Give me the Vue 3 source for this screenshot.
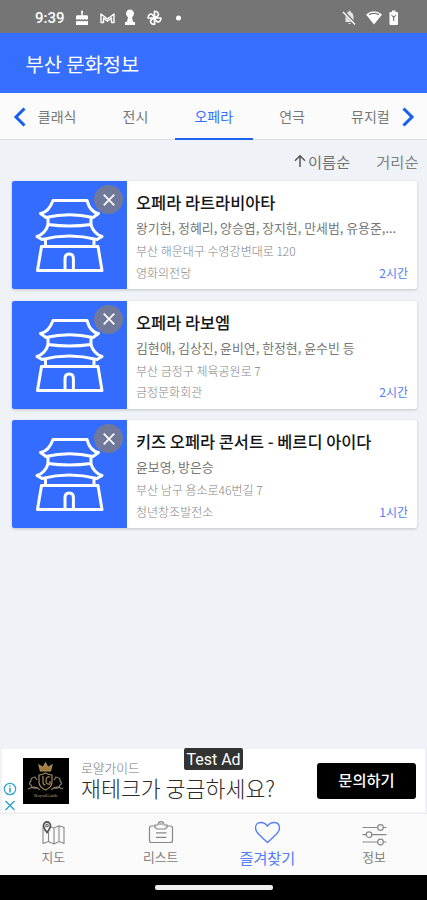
<script setup>
const tabs = [
  { name: '클래식' },
  { name: '전시' },
  { name: '오페라', active: true },
  { name: '연극' },
  { name: '뮤지컬' },
]
const shows = [
  {
    title: '오페라 라트라비아타',
    cast: '왕기헌, 정혜리, 양승엽, 장지헌, 만세범, 유용준,...',
    address: '부산 해운대구 수영강변대로 120',
    venue: '영화의전당',
    time: '2시간',
  },
  {
    title: '오페라 라보엠',
    cast: '김현애, 김상진, 윤비연, 한정현, 윤수빈 등',
    address: '부산 금정구 체육공원로 7',
    venue: '금정문화회관',
    time: '2시간',
  },
  {
    title: '키즈 오페라 콘서트 - 베르디 아이다',
    cast: '윤보영, 방은승',
    address: '부산 남구 용소로46번길 7',
    venue: '청년창조발전소',
    time: '1시간',
  },
]
</script>

<template>
  <div class="screen">
    <div class="status">
      <span class="clock">9:39</span>
      <svg class="s-left" width="112" height="18" viewBox="0 0 112 18" fill="#fff">
        <path d="M7 1.200q2.200 2.400 0 3.600-2.200-1.200 0-3.600zM6.300 4.500h1.400v2H6.300zM2.500 6.200h9q1.500 0 1.500 1.300V10q-1.500 1.300-3 0-1.500 1.300-3 0-1.500 1.300-3 0-1.500 1.300-3 0V7.500q0-1.300 1.500-1.300zM1 11.700q1.500 1 3 0 1.500 1 3 0 1.500 1 3 0 1.500 1 3 0V16H1z" />
        <path d="M26 13.500V5l6.500 5L39 5v8.500h-2.500V9l-4 3.200-4-3.200v4.500z" fill="none" stroke="#fff" stroke-width="1.400" stroke-linejoin="round" />
        <path d="M51.500 6.500a4 4 0 1 1 7 0l-1.500 2 1.200 4.500H60v3H50v-3h1.800L53 8.500z" />
        <path d="M79.500 9V2.300c4 0 5 3.500 2.800 5L79.500 9h6.500c0 4-3.500 5-5 2.800L79.500 9v6.500c-4 0-5-3.500-2.800-5L79.500 9H73c0-4 3.500-5 5-2.800z" fill="none" stroke="#fff" stroke-width="1.600" stroke-linejoin="round" />
        <circle cx="103.500" cy="9" r="2.500" />
      </svg>
      <svg class="s-right" width="58" height="18" viewBox="0 0 58 18" fill="#fff">
        <path d="M3.500 13V8q0-4 3-5V1.800h2V3q3 1 3 5v5zM6 14h3.200q-1.600 2.300-3.200 0z" fill="#e5e5e5" />
        <path d="M1.500 2.500l12 13" stroke="#757575" stroke-width="3" />
        <path d="M1 3l12 12.500" stroke="#fff" stroke-width="1.300" />
        <path d="M24 5.500q8-6.500 16 0l-8 10z" />
        <path d="M27 5.600q5-2.500 10 0" fill="none" stroke="#777" stroke-width="1.200" />
        <path d="M48.500 3H50V1.500h3.500V3H55q1 0 1 1v11q0 1-1 1h-6.500q-1 0-1-1V4q0-1 1-1z" />
        <path d="M49.500 6l2.200 2.500L54 6M51.700 7v5" fill="none" stroke="#777" stroke-width="1.100" />
      </svg>
    </div>

    <header class="header">부산 문화정보</header>

    <nav class="tabs">
      <svg class="chev" width="40" height="46" viewBox="0 0 40 46"><path d="M24.500 15.500L16 24l8.500 8.500" /></svg>
      <div class="tab-list">
        <div v-for="t in tabs" :key="t.name" class="tab" :class="{ active: t.active }">{{ t.name }}</div>
      </div>
      <svg class="chev next" width="40" height="46" viewBox="0 0 40 46"><path d="M14.500 15.500L23 24l-8.500 8.500" /></svg>
    </nav>

    <div class="sort">
      <span class="by-name">
        <svg width="14" height="14" viewBox="0 0 14 14"><path d="M7 13V2M2 6.700L7 1.800l5 4.900" fill="none" stroke="#555" stroke-width="1.500" /></svg>이름순
      </span>
      <span>거리순</span>
    </div>

    <main class="list">
      <article v-for="s in shows" :key="s.title" class="card">
        <div class="thumb">
          <svg width="115" height="108" viewBox="0 0 115 108" fill="none" stroke="#fff" stroke-width="3" stroke-linejoin="round" stroke-linecap="round">
            <path d="M41 19.500h34M41 19.500Q37 31 28.500 32.500L34 36.500Q57 31 81 36.500L86.500 32.500Q78 31 75 19.500" />
            <path d="M36 37v6M79 37v6M36 43.500Q57 46.500 79 43.500" />
            <path d="M36 44Q33 53 25 55.500L30 58.500Q57 51.500 85 58.500L90 55.500Q82 53 79 44" />
            <path d="M33.500 59v6M82 59v6M29.500 65.500h56.500L90 89.500H25.500zM53 89V77.500q0-4.500 4.200-4.500t4.200 4.500V89" />
          </svg>
          <span class="remove">
            <svg width="28" height="28" viewBox="0 0 28 28"><path d="M8.700 8.700l10.600 10.600M19.300 8.700L8.700 19.300" stroke="#fff" stroke-width="1.700" /></svg>
          </span>
        </div>
        <div class="info">
          <h2>{{ s.title }}</h2>
          <p class="cast">{{ s.cast }}</p>
          <p class="small">{{ s.address }}</p>
          <p class="small foot"><span>{{ s.venue }}</span><span class="time">{{ s.time }}</span></p>
        </div>
      </article>
    </main>

    <section class="ad">
      <div class="ad-marks">
        <svg width="14" height="30" viewBox="0 0 14 30" fill="none" stroke="#2aa3cd" stroke-width="1.200">
          <circle cx="7" cy="7" r="5.700" /><path d="M7 6v4.500M7 3.500v1.300" stroke-width="1.600" /><path d="M2.500 19l9 9M11.500 19l-9 9" stroke-width="1.400" />
        </svg>
      </div>
      <svg class="ad-logo" width="46" height="46" viewBox="0 0 46 46">
        <rect width="46" height="46" fill="#000" />
        <g fill="none" stroke="#a78b58" stroke-width="1.200">
          <path d="M17.500 13L16 7l4 2.500L22.500 5 25 9.500 29 7l-1.500 6z" fill="#a47a3d" />
          <path d="M16 17q3 0 6.500-2 3.500 2 6.500 2v7q0 5-6.500 8-6.500-3-6.500-8z" />
          <path d="M20 18v6q0 3 2.500 3M27 19q-4-1-4 3.500t4 3.500v-3" />
          <path d="M15 30Q9 31 8 27q-3-1 0-4-1-3 4-4l2 3M30 30q6 1 7-3 3-1 0-4 1-3-4-4l-2 3M5 31q8-4 12 1M40 31q-8-4-12 1" stroke="#857c66" />
        </g>
        <text x="23" y="38.500" text-anchor="middle" class="logo-text">RoyalGuide</text>
      </svg>
      <div class="ad-copy">
        <div class="ad-brand">로얄가이드</div>
        <div class="ad-title">재테크가 궁금하세요?</div>
      </div>
      <div class="ad-button">문의하기</div>
      <div class="test-ad">Test Ad</div>
    </section>

    <nav class="bottom">
      <div class="item">
        <svg width="28" height="28" viewBox="0 0 28 28" fill="none" stroke="#888" stroke-width="1.100">
          <path d="M9 8.500L4 7v16.500l5.500-2 5.500 2.500 5-2.500 5 2V7.500l-5-1.700-5 2.200-3-1M9.500 12v9.500M15 8v16M20 6v15.500" />
          <path d="M8 12.500Q4.500 8 4.500 5.500a3.500 3.500 0 1 1 7 0Q11.500 8 8 12.500z" stroke="#555" stroke-width="1.800" fill="#fafafa" /><circle cx="8" cy="5.500" r="1.300" stroke="#666" />
        </svg>
        <span>지도</span>
      </div>
      <div class="item">
        <svg width="28" height="28" viewBox="0 0 28 28" fill="none" stroke="#888" stroke-width="1.200">
          <path d="M8 6H4.500Q2.500 6 2.500 8v12.500q0 2 2 2h19q2 0 2-2V8q0-2-2-2H20M8 6v1.500l2 1.500h8l2-1.500V5h-3q0-3.300-3-3.300T11 5H8zM9 12.800h10.500M9 17.300h10.500" />
          <path d="M11 5h6v-1q-3-3-6 0z" fill="#bbb" stroke="none" />
        </svg>
        <span>리스트</span>
      </div>
      <div class="item on">
        <svg width="28" height="28" viewBox="0 0 28 28" fill="none" stroke="#527df5" stroke-width="1.300" stroke-linejoin="round">
          <path d="M14.500 22.500Q10.500 19 6 14.500Q2.500 11 2.500 8Q2.500 2.500 8 2.500Q12 2.500 14.500 6.200Q17 2.500 21 2.500Q26.500 2.500 26.500 8Q26.500 11 23 14.500Q18.500 19 14.500 22.500z" />
        </svg>
        <span>즐겨찾기</span>
      </div>
      <div class="item">
        <svg width="28" height="28" viewBox="0 0 28 28" fill="none" stroke="#888" stroke-width="1.200">
          <path d="M2.500 7.500h24M2.500 14.700h24M2.500 22h24" /><g fill="#fafafa"><circle cx="20.500" cy="7.500" r="2.800" /><circle cx="9" cy="14.700" r="2.800" /><circle cx="20.500" cy="22" r="2.800" /></g>
        </svg>
        <span>정보</span>
      </div>
    </nav>
    <div class="gesture"><i></i></div>
  </div>
</template>

<style>
body { margin: 0; }
</style>

<style scoped>
.screen {
  width: 427px; height: 900px; display: flex; flex-direction: column; overflow: hidden;
  background: #eff3f8; font-family: "Noto Sans CJK KR", sans-serif; color: #777;
}
.status { height: 33px; flex: none; background: #757575; display: flex; align-items: center; color: #fff; padding: 2px 0 0 35px; box-sizing: border-box; }
.clock { width: 40px; font: 500 15px/18px Roboto, sans-serif; }
.s-right { margin-left: 155px; }
.header { height: 60px; flex: none; box-sizing: border-box; padding-left: 25.500px; background: #366fff; color: #fff; font-size: 19.800px; line-height: 61px; }
.tabs { height: 47px; flex: none; display: flex; background: #fbfbfb; border-bottom: 1px solid #dcdfe0; box-sizing: border-box; }
.chev { flex: none; width: 40px; margin-right: -22px; fill: none; stroke: #155eef; stroke-width: 3; }
.chev.next { margin: 0 -1px 0 -20px; }
.tab-list { flex: 1; display: grid; grid-template-columns: repeat(5, 78.300px); }
.tab { height: 47px; box-sizing: border-box; text-align: center; font-size: 14px; line-height: 47px; }
.tab.active { color: #366fff; border-bottom: 2px solid #1c63ee; }
.sort { height: 41px; flex: none; display: flex; justify-content: flex-end; gap: 26px; padding-right: 8.500px; font-size: 15.300px; line-height: 42px; color: #808080; }
.by-name { display: flex; align-items: center; gap: 1px; color: #707070; }
.list { flex: 1; display: flex; flex-direction: column; gap: 11.700px; padding: 0 10px 0 12px; }
.card { height: 108px; display: flex; background: #fff; border-radius: 2px; box-shadow: 0 1px 3px #0003; }
.thumb { width: 115px; height: 108px; flex: none; position: relative; background: #336cff; border-radius: 2px 0 0 2px; overflow: hidden; }
.thumb > svg { display: block; }
.remove { position: absolute; left: 82px; top: 4px; width: 29px; height: 29px; border-radius: 50%; background: #70799a; display: flex; align-items: center; justify-content: center; }
.info { flex: 1; padding: 9px 9px 0; min-width: 0; }
h2 { margin: 0; font-size: 16.400px; line-height: 25px; font-weight: 500; color: #161616; white-space: nowrap; }
p { margin: 0; white-space: nowrap; }
.cast { font-size: 12.900px; line-height: 25px; color: #777; }
.small { font-size: 12px; line-height: 21.500px; color: #848484; font-weight: 300; }
.foot { display: flex; justify-content: space-between; }
.time { color: #527df5; font-weight: 400; }
.ad { height: 63px; flex: none; position: relative; margin: 0 2px; padding: 0 9px 0 1px; background: #fff; display: flex; align-items: center; }
.ad-marks { width: 20px; padding-top: 32px; }
.ad-marks svg { display: block; }
.ad-logo { flex: none; }
.logo-text { font: 5px "Liberation Serif", serif; fill: #b79d6b; }
.ad-copy { flex: 1; padding-left: 12px; padding-bottom: 5px; white-space: nowrap; }
.ad-brand { font-size: 12.800px; line-height: 18px; color: #777; font-weight: 300; padding-top: 2px; }
.ad-title { font-size: 21.700px; line-height: 22px; color: #2b2b2b; font-weight: 300; }
.ad-button { width: 99px; height: 36px; border-radius: 3px; background: #000; color: #fff; font-size: 15.300px; font-weight: 500; line-height: 33px; text-align: center; }
.test-ad { position: absolute; left: 182px; top: -1px; width: 59px; height: 22px; border-radius: 2px; background: #333; color: #fff; font: 16px/23px Roboto, sans-serif; text-align: center; }
.bottom { height: 62px; flex: none; margin-top: 1px; box-sizing: border-box; border-top: 1px solid #eee; background: #fafafa; display: grid; grid-template-columns: repeat(4, 1fr); padding-top: 6px; }
.item { display: flex; flex-direction: column; align-items: center; font-size: 12.800px; line-height: 20px; color: #808080; }
.item span { margin-top: -1px; }
.item:nth-child(n + 2) { padding-left: 1px; }
.item.on { font-size: 15.200px; color: #527df5; }
.gesture { height: 25px; flex: none; background: #000; display: flex; align-items: center; justify-content: center; }
.gesture i { width: 118px; height: 5px; border-radius: 2px; background: #eee; }
</style>
